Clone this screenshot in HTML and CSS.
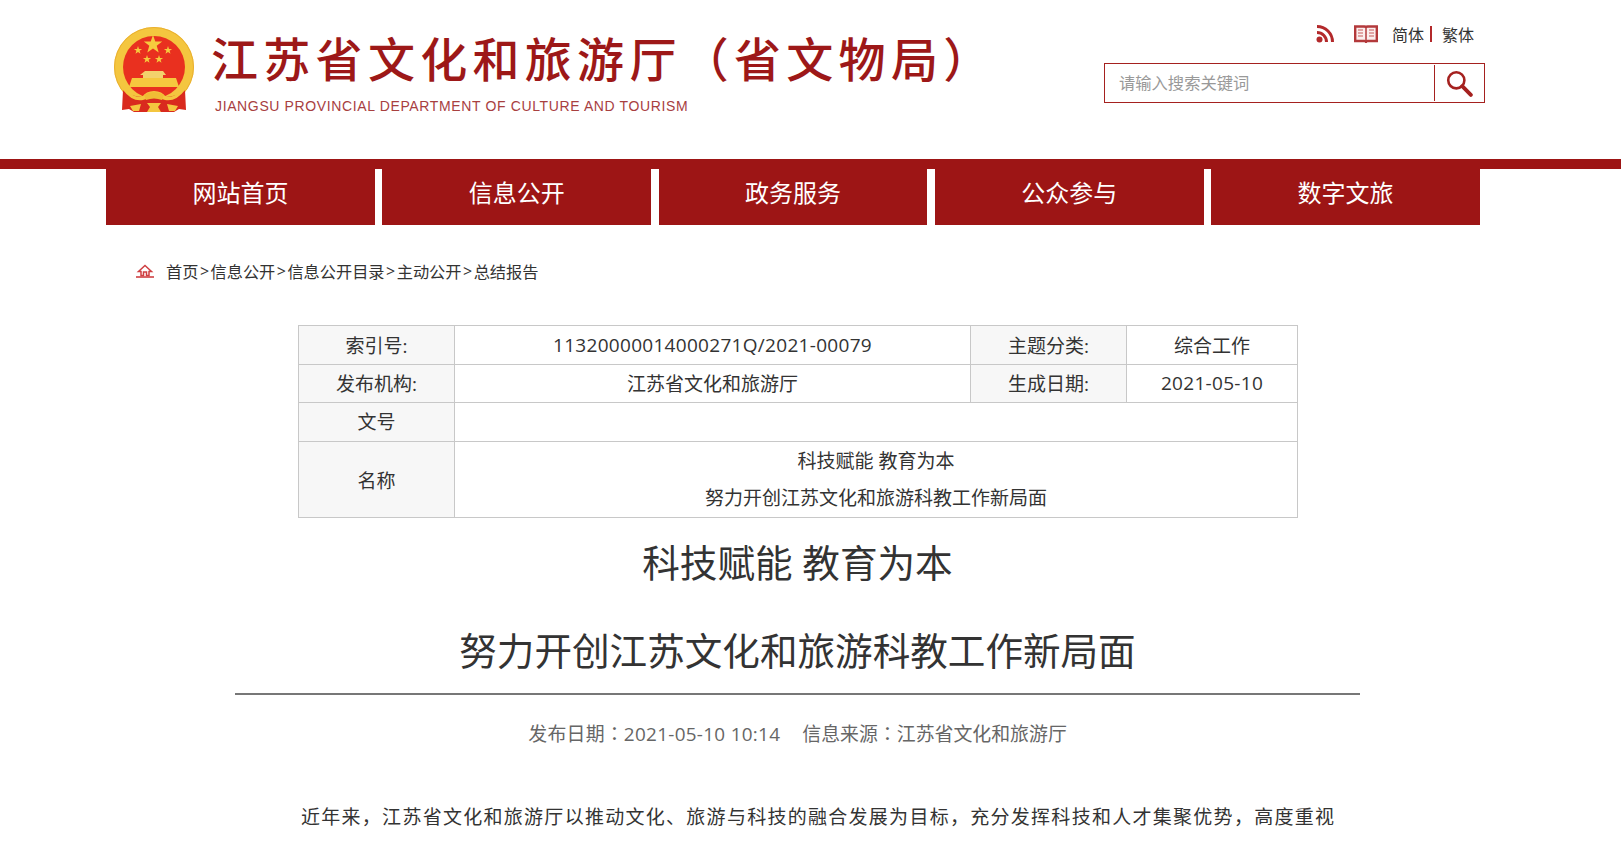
FILE: index.html
```html
<!DOCTYPE html>
<html lang="zh-CN">
<head>
<meta charset="utf-8">
<title>科技赋能 教育为本</title>
<link rel="stylesheet" href="styles.css">
</head>
<body>
<header class="top">
  <div class="brand">
    <svg class="emblem" viewBox="0 0 84 88" width="84" height="88" aria-hidden="true">
      <circle cx="42" cy="42" r="40" fill="#f4c63f"/>
      <circle cx="42" cy="42" r="39.5" fill="none" stroke="#eab030" stroke-width="1"/>
      <circle cx="42" cy="42" r="31" fill="#e9301f"/>
      <path d="M41 10 l2.3 6.5 6.9 .1 -5.5 4.2 2 6.6 -5.7-3.9 -5.7 3.9 2-6.6 -5.5-4.2 6.9-.1z" fill="#f6cb3e"/>
      <path d="M26 21 l1 2.9 3.1 0 -2.5 1.9 .9 3 -2.5-1.8 -2.5 1.8 .9-3 -2.5-1.9 3.1 0z" fill="#f6cb3e"/>
      <path d="M56 21 l1 2.9 3.1 0 -2.5 1.9 .9 3 -2.5-1.8 -2.5 1.8 .9-3 -2.5-1.9 3.1 0z" fill="#f6cb3e"/>
      <path d="M35 30 l1 2.9 3.1 0 -2.5 1.9 .9 3 -2.5-1.8 -2.5 1.8 .9-3 -2.5-1.9 3.1 0z" fill="#f6cb3e"/>
      <path d="M47 30 l1 2.9 3.1 0 -2.5 1.9 .9 3 -2.5-1.8 -2.5 1.8 .9-3 -2.5-1.9 3.1 0z" fill="#f6cb3e"/>
      <path d="M33 46 H51 L54 50 H51 V53 H31 V50 H28Z" fill="#f3d26c"/>
      <path d="M20 53 H64 L67 62 H17Z" fill="#f6c83e"/>
      <path d="M11 65 Q20 72 30 72 H54 Q64 72 73 65 L74 85 L67 84 L62 87 H22 L17 84 L10 85Z" fill="#d92a1e"/>
      <path d="M13 63 Q21 73 30 72 Q34 66 42 66 Q50 66 54 72 Q63 73 71 63 L73 65 Q64 77 53 75 Q42 70 31 75 Q20 77 11 65Z" fill="#f4c63f"/>
      <path d="M32 70 Q42 64 52 70 L50 75 Q42 72 34 75Z" fill="#f0bb35"/>
      <path d="M35 78 H49 L46 82 L49 87 H35 L38 82Z M18 81 L29 79 L27 86 H21Z M66 81 L55 79 L57 86 H63Z" fill="#f4c63f"/>
    </svg>
    <div class="brand-text">
      <div class="brand-cn">江苏省文化和旅游厅（省文物局）</div>
      <div class="brand-en">JIANGSU PROVINCIAL DEPARTMENT OF CULTURE AND TOURISM</div>
    </div>
  </div>
  <div class="tools">
    <div class="tool-links">
      <svg class="rss" viewBox="0 0 20 20" width="20" height="20" aria-hidden="true">
        <circle cx="4.5" cy="15.5" r="3" fill="#b3292b"/>
        <path d="M2 8.5 A9.5 9.5 0 0 1 11.5 18" fill="none" stroke="#b3292b" stroke-width="3"/>
        <path d="M2 2.5 A15.5 15.5 0 0 1 17.5 18" fill="none" stroke="#b3292b" stroke-width="3"/>
      </svg>
      <svg class="book" viewBox="0 0 24 18" width="24" height="18" aria-hidden="true">
        <path d="M1.2 1.5 H10.5 Q12 1.5 12 3 Q12 1.5 13.5 1.5 H22.8 V16 H13.5 Q12.5 16 12 17 Q11.5 16 10.5 16 H1.2Z" fill="#fbeeee" stroke="#b3393b" stroke-width="2.4"/>
        <path d="M12 2 V16.5" stroke="#b3393b" stroke-width="1.5"/>
        <path d="M4 5 H9 M4 8 H9 M4 11 H9 M15 5 H20 M15 8 H20 M15 11 H20" stroke="#d98c8c" stroke-width="1.5"/>
      </svg>
      <span class="lang">简体</span><span class="lang-sep"></span><span class="lang">繁体</span>
    </div>
    <div class="search">
      <span class="search-hint">请输入搜索关键词</span>
      <span class="search-btn">
        <svg viewBox="0 0 26 26" width="28" height="28" aria-hidden="true">
          <circle cx="10.5" cy="10.5" r="7.5" fill="none" stroke="#a5211f" stroke-width="2.4"/>
          <path d="M16 16 L24 24" stroke="#a5211f" stroke-width="3.6" stroke-linecap="round"/>
        </svg>
      </span>
    </div>
  </div>
</header>

<nav class="nav-band">
  <ul class="nav">
    <li class="nav-item">网站首页</li>
    <li class="nav-item">信息公开</li>
    <li class="nav-item">政务服务</li>
    <li class="nav-item">公众参与</li>
    <li class="nav-item">数字文旅</li>
  </ul>
</nav>

<div class="crumbs">
  <svg class="home" viewBox="0 0 20 14" width="20" height="14" aria-hidden="true">
    <path d="M10 1.5 L16.5 7.5 H14 V11.5 H11.5 V8 H8.5 V11.5 H6 V7.5 H3.5Z" fill="none" stroke="#cf3f42" stroke-width="1.5"/>
    <path d="M1 13 H19" stroke="#cf3f42" stroke-width="1.6"/>
  </svg>
  <span>首页</span><i>&gt;</i><span>信息公开</span><i>&gt;</i><span>信息公开目录</span><i>&gt;</i><span>主动公开</span><i>&gt;</i><span>总结报告</span>
</div>

<main class="content">
  <table class="meta-table">
    <colgroup><col class="c1"><col class="c2"><col class="c3"><col class="c4"></colgroup>
    <tr class="r1"><th>索引号:</th><td class="num">11320000014000271Q/2021-00079</td><th>主题分类:</th><td>综合工作</td></tr>
    <tr class="r2"><th>发布机构:</th><td>江苏省文化和旅游厅</td><th>生成日期:</th><td class="num">2021-05-10</td></tr>
    <tr class="r3"><th>文号</th><td colspan="3"></td></tr>
    <tr class="r4"><th>名称</th><td colspan="3"><p>科技赋能 教育为本</p><p>努力开创江苏文化和旅游科教工作新局面</p></td></tr>
  </table>
  <h1 class="title"><span class="title-line">科技赋能 教育为本</span><span class="title-line">努力开创江苏文化和旅游科教工作新局面</span></h1>
  <div class="info"><span class="num">发布日期<span class="colon" lang="zh-TW">：</span>2021-05-10 10:14</span><span>信息来源<span class="colon" lang="zh-TW">：</span>江苏省文化和旅游厅</span></div>
  <p class="body-text">近年来，江苏省文化和旅游厅以推动文化、旅游与科技的融合发展为目标，充分发挥科技和人才集聚优势，高度重视</p>
</main>
</body>
</html>
```
FILE: styles.css
```css
* { box-sizing: border-box; }
html, body { margin: 0; padding: 0; }
body {
  background: #fff;
  color: #333;
  font-family: "Open Sans", "Noto Sans CJK SC", sans-serif;
  overflow: hidden;
  height: 851px;
}
.top {
  height: 159px;
  padding: 25px 136px 0 112px;
  display: flex;
  justify-content: space-between;
  align-items: flex-start;
}
.brand { display: flex; gap: 15px; }
.emblem { display: block; }
.brand-text { padding-top: 4px; }
.brand-cn {
  font-size: 47px;
  font-weight: 500;
  line-height: 60px;
  letter-spacing: 5.3px;
  color: #9d1818;
  white-space: nowrap;
}
.brand-en {
  font-family: "Liberation Sans", sans-serif;
  font-size: 14px;
  line-height: 18px;
  margin: 8px 0 0 4px;
  color: #a8403f;
  letter-spacing: 0.63px;
  white-space: nowrap;
}
.tools { width: 381px; }
.tool-links {
  height: 38px;
  padding: 0 11px 20px 0;
  display: flex;
  justify-content: flex-end;
  align-items: center;
  font-size: 16px;
  color: #333;
}
.rss { margin-right: 19px; }
.book { margin-right: 14px; }
.lang-sep { width: 2px; height: 16px; background: #b3292b; margin: 0 10px 0 6px; }
.search {
  height: 40px;
  border: 1px solid #a5211f;
  display: flex;
  align-items: center;
  justify-content: space-between;
  padding-left: 14px;
}
.search-hint { font-size: 16.3px; color: #999; position: relative; top: -1px; }
.search-btn {
  width: 50px;
  height: 36px;
  border-left: 1px solid #a5211f;
  padding-right: 2px;
  display: flex;
  align-items: center;
  justify-content: center;
}
.nav-band { border-top: 10px solid #9d1515; }
.nav {
  list-style: none;
  margin: 0 0 0 106px;
  padding: 0;
  display: flex;
  gap: 7.5px;
  width: 1374px;
}
.nav-item {
  flex: 1;
  height: 56px;
  line-height: 48px;
  background: #9d1515;
  color: #fff;
  font-size: 24px;
  text-align: center;
}
.crumbs {
  margin-top: 30px;
  padding-left: 135px;
  height: 32px;
  display: flex;
  align-items: center;
  font-size: 16.2px;
  color: #333;
}
.home { margin-right: 11px; }
.crumbs i { font-style: normal; margin: 0 1.5px; font-size: 16px; }
.content { margin: 38px 0 0 235px; width: 1125px; }
.meta-table {
  border-collapse: collapse;
  table-layout: fixed;
  width: 999px;
  margin-left: 63px;
  font-size: 19px;
  color: #333;
  text-align: center;
}
.meta-table th, .meta-table td {
  border: 1px solid #c8c8c8;
  padding: 0;
  font-weight: 400;
}
.meta-table th { background: #f7f7f7; }
.c1 { width: 156px; }
.c2 { width: 516px; }
.c3 { width: 156px; }
.c4 { width: 171px; }
.r1 { height: 39px; }
.r2 { height: 38px; }
.r3 { height: 39px; }
.r4 { height: 76px; }
.meta-table .r2 th, .meta-table .r2 td, .meta-table .r3 th { padding-bottom: 2px; }
.meta-table p { margin: 0; line-height: 37px; }
.num { letter-spacing: 0.3px; }
.title {
  margin: 3px 0 0;
  font-size: 37.6px;
  font-weight: 400;
  text-align: center;
  color: #333;
  border-bottom: 2px solid #777;
  display: flex;
  flex-direction: column;
  gap: 4px;
}
.title-line { line-height: 84px; }
.info {
  margin-top: 20px;
  display: flex;
  justify-content: center;
  gap: 22px;
  font-size: 18.9px;
  line-height: 36px;
  color: #666;
}
.colon { font-family: "Noto Sans CJK TC", sans-serif; letter-spacing: 0; }
.body-text {
  margin: 47px 0 0 66px;
  font-size: 19px;
  line-height: 36px;
  letter-spacing: 1.28px;
  color: #333;
  white-space: nowrap;
}
```
